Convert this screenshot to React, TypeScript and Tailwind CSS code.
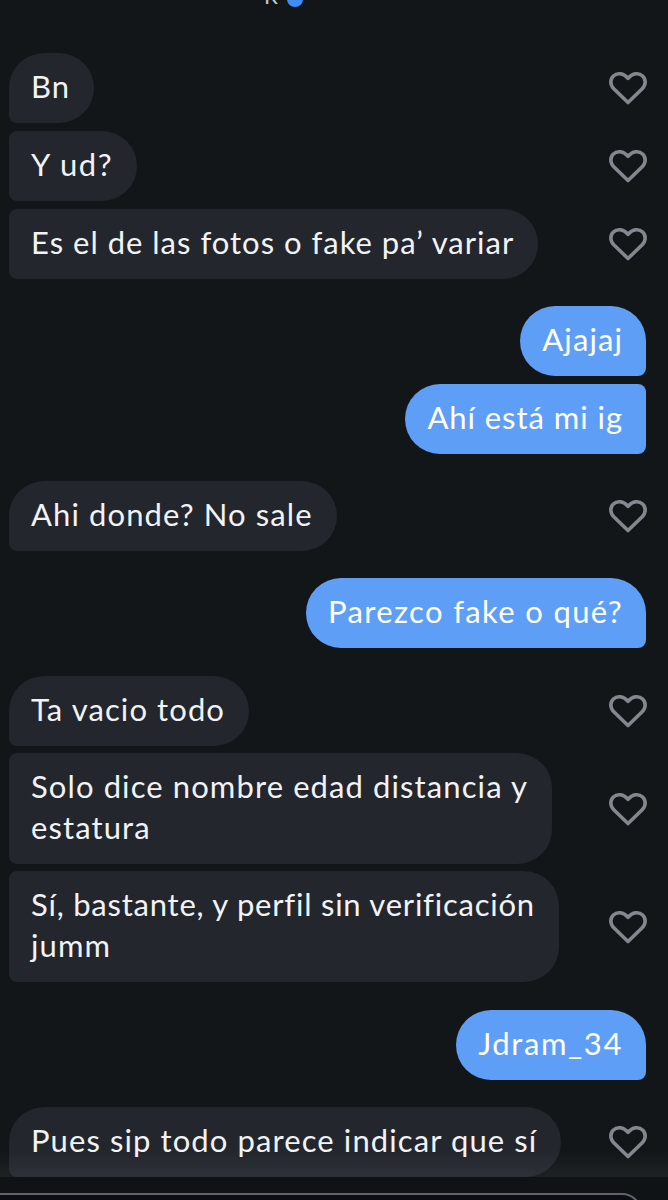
import type { ReactNode } from "react";
function Heart() {
  return (
    <svg width="38" height="34" viewBox="0 0 38 34" fill="none" className="shrink-0">
      <path d="M19 31.5 L4.8 17.8 C0.8 13.8 1 8.2 4.4 5 C8 1.6 14.6 1.8 19 7.4 C23.4 1.8 30 1.6 33.6 5 C37 8.2 37.2 13.8 33.2 17.8 Z" stroke="#85878f" strokeWidth="3.6" strokeLinejoin="round" />
    </svg>
  );
}
function In({ children, cls }: { children: ReactNode; cls: string }) {
  return (
    <div className="flex items-center justify-between pl-[9px] pr-[21px]">
      <div className={"bg-[#23262d] text-[#f2f3f5] pl-[22px] pr-[24px] pt-[13px] pb-[16px] text-[31px] leading-[41px] tracking-[1.1px] whitespace-nowrap " + cls}>{children}</div>
      <Heart />
    </div>
  );
}
function Out({ children, cls }: { children: ReactNode; cls: string }) {
  return (
    <div className="flex justify-end pr-[22px]">
      <div className={"bg-[#5f9ef6] text-white pl-[22px] pr-[23px] pt-[13px] pb-[16px] text-[31px] leading-[41px] tracking-[1.1px] whitespace-nowrap " + cls}>{children}</div>
    </div>
  );
}
const first = "rounded-tl-[35px] rounded-tr-[35px] rounded-br-[35px] rounded-bl-[8px]";
const mid = "rounded-tl-[8px] rounded-tr-[35px] rounded-br-[35px] rounded-bl-[8px]";
const outFirst = "rounded-tl-[35px] rounded-tr-[35px] rounded-bl-[35px] rounded-br-[8px]";
const outMid = "rounded-tl-[35px] rounded-tr-[8px] rounded-bl-[35px] rounded-br-[8px]";
export default function App() {
  return (
    <div className="relative w-[668px] h-[1200px] overflow-hidden bg-[#121619] font-['Lato','Liberation_Sans',sans-serif]">
      <div className="h-[42px] relative">
        <div className="absolute -top-[16px] left-[264px] flex items-center gap-[9px]">
          <span className="text-[#c9cbcf] text-[22px] leading-[24px]">R</span>
          <span className="w-[16px] h-[16px] rounded-full bg-[#3f8df5] mt-[6px]" />
        </div>
      </div>
      <div className="flex flex-col pt-[11px]">
        <div className="flex flex-col gap-[8px]">
          <In cls={first}>Bn</In>
          <In cls={mid}><span className="tracking-[1.5px]">Y ud?</span></In>
          <In cls={mid}><span className="tracking-[1px]">Es el de las fotos o fake pa’ variar</span></In>
        </div>
        <div className="flex flex-col gap-[8px] mt-[27px]">
          <Out cls={outFirst}>Ajajaj</Out>
          <Out cls={outMid}><span className="tracking-[0.95px]">Ahí está mi ig</span></Out>
        </div>
        <div className="mt-[27px]"><In cls={first}>Ahi donde? No sale</In></div>
        <div className="mt-[27px]"><Out cls={outFirst}><span className="tracking-[1.35px]">Parezco fake o qué?</span></Out></div>
        <div className="flex flex-col gap-[7px] mt-[28px]">
          <In cls={first}>Ta vacio todo</In>
          <In cls={mid}>Solo dice nombre edad distancia y<br />estatura</In>
          <In cls={mid}><span className="tracking-[0.77px]">Sí, bastante, y perfil sin verificación</span><br />jumm</In>
        </div>
        <div className="mt-[28px]"><Out cls={outFirst}><span className="tracking-[1.6px]">Jdram_34</span></Out></div>
        <div className="mt-[27px]"><In cls={first}>Pues sip todo parece indicar que sí</In></div>
      </div>
      <div className="absolute left-0 right-0 top-[1150px] h-[27px] bg-gradient-to-b from-transparent to-[#ffffff0d]" />
      <div className="absolute left-0 right-0 top-[1177px] bottom-0 bg-[#101316]">
        <div className="absolute -left-[24px] right-[26px] top-[16px] h-[40px] rounded-[22px] border-2 border-[#5f626e] bg-[#0b0d10]" />
      </div>
    </div>
  );
}
